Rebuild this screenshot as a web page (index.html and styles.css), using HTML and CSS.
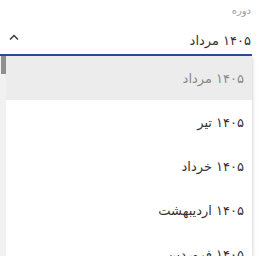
FILE: index.html
```html
<!DOCTYPE html>
<html lang="fa">
<head>
    <meta charset="utf-8">
    <link rel="stylesheet" href="styles.css">
</head>
<body>
    <div class="field">
        <label class="field-label">دوره</label>
        <div class="select">
            <span class="select-value">۱۴۰۵ مرداد</span>
            <svg class="caret" width="10" height="6" viewBox="0 0 10 6">
                <path d="M1 5.5 L5 1.5 L9 5.5" fill="none" stroke="#333" stroke-width="1.4"/>
            </svg>
        </div>
        <div class="dropdown">
            <ul class="options" id="options">
                <!-- filled by script.js -->
            </ul>
            <div class="scroll-track"><div class="scroll-thumb"></div></div>
        </div>
    </div>

    <script src="script.js"></script>
</body>
</html>
```

FILE: styles.css
```css
body {
    margin: 0;
    font-family: "DejaVu Sans", "Noto Sans", sans-serif;
    background: #fff;
}

.field {
    width: 252px;
    direction: rtl;
}

.field-label {
    display: block;
    padding: 3px 1px 0 0;
    font-size: 10px;
    line-height: 16px;
    color: #9e9e9e;
}

.select {
    display: flex;
    align-items: center;
    justify-content: space-between;
    padding: 12px 1px 3px 9px;
    line-height: 20px;
    border-bottom: 2px solid #2e4c9c;
}

.select-value {
    font-size: 13px;
    color: #333;
}

.caret {
    display: block;
    margin-bottom: 8px;
}

.dropdown {
    position: relative;
    background: #fff;
    box-shadow: 0 2px 4px rgba(0, 0, 0, 0.25);
}

.options {
    list-style: none;
    margin: 0;
    padding: 0;
    height: 200px;
    overflow-y: auto;
    scrollbar-width: none;
}

.options::-webkit-scrollbar {
    display: none;
}

.scroll-track {
    position: absolute;
    top: 0;
    left: 0;
    bottom: 0;
    width: 6px;
    background: #f1f1f1;
}

.scroll-thumb {
    width: 5px;
    height: 18px;
    background: #8f8f8f;
}

.option {
    height: 44px;
    display: flex;
    align-items: center;
    padding-right: 8px;
    font-size: 13px;
    color: #333;
}

.option.selected {
    background: #ececec;
    color: #8a8a8a;
}
```

FILE: script.js
```js
var months = ['فروردین', 'اردیبهشت', 'خرداد', 'تیر', 'مرداد', 'شهریور',
    'مهر', 'آبان', 'آذر', 'دی', 'بهمن', 'اسفند'];

function faDigits(n) {
    return String(n).replace(/\d/g, function (d) {
        return '۰۱۲۳۴۵۶۷۸۹'[d];
    });
}

var list = document.getElementById('options');
var year = 1405;
var month = 4;

for (var i = 0; i < 45; i++) {
    var li = document.createElement('li');
    li.className = 'option' + (i === 0 ? ' selected' : '');
    li.textContent = faDigits(year) + ' ' + months[month];
    list.appendChild(li);
    month--;
    if (month < 0) {
        month = 11;
        year--;
    }
}
```
